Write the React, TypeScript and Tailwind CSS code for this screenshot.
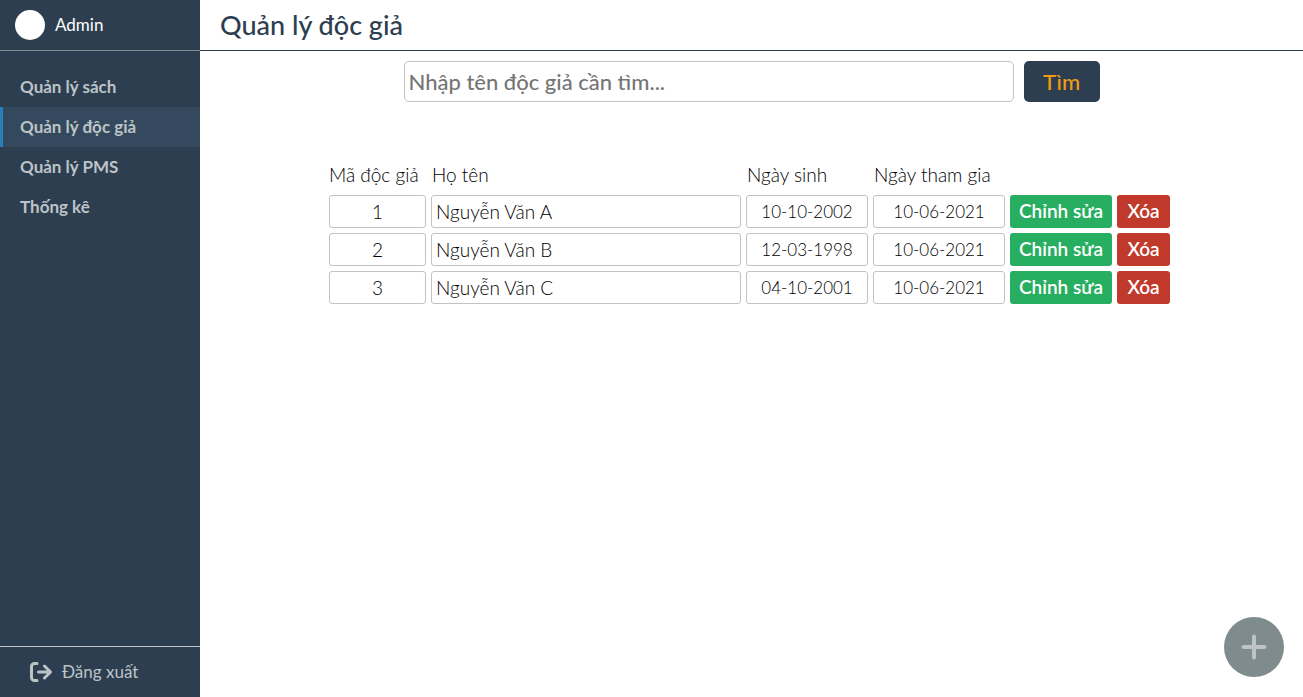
import React from "react";

const navItems = ["Quản lý sách", "Quản lý độc giả", "Quản lý PMS", "Thống kê"];

const readers = [
  { id: 1, name: "Nguyễn Văn A", birthday: "10-10-2002", joined: "10-06-2021" },
  { id: 2, name: "Nguyễn Văn B", birthday: "12-03-1998", joined: "10-06-2021" },
  { id: 3, name: "Nguyễn Văn C", birthday: "04-10-2001", joined: "10-06-2021" },
];

const cell = "h-[33px] rounded-[3px] border border-[#bdc3c7] p-0";

function Sidebar() {
  return (
    <aside className="flex w-[200px] shrink-0 flex-col bg-[#2c3e50] text-[#bdc3c7]">
      <div className="flex h-[51px] items-center gap-2.5 border-b border-[#7f8c8d] px-[15px] text-white">
        <span className="size-[30px] rounded-full bg-white" />
        <span className="text-[17px]">Admin</span>
      </div>
      <nav className="flex flex-1 flex-col pt-4">
        {navItems.map((item, i) => (
          <a
            key={item}
            href="#"
            aria-current={i === 1 ? "page" : undefined}
            className={
              i === 1
                ? "flex h-10 items-center border-l-[3px] border-[#2980b9] bg-[#34495e] pl-[17px] text-[17px] font-bold"
                : "flex h-10 items-center border-l-[3px] border-transparent pl-[17px] text-[17px] font-bold"
            }
          >
            {item}
          </a>
        ))}
      </nav>
      <a href="#" className="flex h-[51px] items-center gap-2.5 border-t border-[#bdc3c7] pl-[30px] text-[17px]">
        <svg viewBox="0 0 22 20" className="h-5 w-[22px]" fill="none" stroke="currentColor" strokeWidth="3" strokeLinecap="round" strokeLinejoin="round" aria-hidden="true">
          <path d="M7 1.500H4.500a3 3 0 0 0-3 3v11a3 3 0 0 0 3 3H7M8.500 10H20.500M14.500 4l6 6-6 6" />
        </svg>
        Đăng xuất
      </a>
    </aside>
  );
}

export default function App() {
  return (
    <div className="flex min-h-screen bg-white font-['Lato',sans-serif]">
      <Sidebar />
      <main className="min-w-0 flex-1">
        <header className="flex h-[51px] items-center border-b border-[#2c3e50] px-5">
          <h1 className="text-[27px] font-medium text-[#2c3e50]">Quản lý độc giả</h1>
        </header>
        <form className="flex justify-center gap-2.5 px-5 pt-2.5" onSubmit={(e) => e.preventDefault()}>
          <input
            type="text"
            aria-label="Tên độc giả"
            placeholder="Nhập tên độc giả cần tìm..."
            className="h-[41px] w-full max-w-[610px] rounded-[5px] border border-[#bdc3c7] px-1 text-[22px] font-medium outline-none placeholder:text-[#757575]"
          />
          <button type="submit" className="h-[41px] w-[76px] shrink-0 rounded-[5px] bg-[#2c3e50] text-[22px] font-medium text-[#f39c12]">
            Tìm
          </button>
        </form>
        <div className="flex justify-center pt-14 pr-1">
          <table className="w-full max-w-[851px] table-fixed border-separate border-spacing-[5px] text-[19px] leading-6 text-black">
            <colgroup>
              <col className="w-[97px]" />
              <col />
              <col className="w-[122px]" />
              <col className="w-[132px]" />
              <col className="w-[102px]" />
              <col className="w-[53px]" />
            </colgroup>
            <thead>
              <tr className="h-[27px] text-left align-top whitespace-nowrap">
                <th className="p-0 font-light">Mã độc giả</th>
                <th className="p-0 pl-px font-light">Họ tên</th>
                <th className="p-0 pl-px font-light">Ngày sinh</th>
                <th className="p-0 pl-px font-light">Ngày tham gia</th>
                <td className="p-0" />
                <td className="p-0" />
              </tr>
            </thead>
            <tbody>
              {readers.map((r) => (
                <tr key={r.id} className="font-light">
                  <td className={`${cell} text-center`}>{r.id}</td>
                  <td className={`${cell} pl-1`}>{r.name}</td>
                  <td className={`${cell} text-center text-[17px]`}>{r.birthday}</td>
                  <td className={`${cell} text-center text-[17px]`}>{r.joined}</td>
                  <td className="p-0">
                    <button type="button" className="block h-[33px] w-full rounded-[3px] bg-[#27ae60] pb-0.5 font-semibold text-white">
                      Chỉnh sửa
                    </button>
                  </td>
                  <td className="p-0">
                    <button type="button" className="block h-[33px] w-full rounded-[3px] bg-[#c0392b] pb-0.5 font-semibold text-white">
                      Xóa
                    </button>
                  </td>
                </tr>
              ))}
            </tbody>
          </table>
        </div>
      </main>
      <button type="button" aria-label="Thêm độc giả" className="fixed right-[19px] bottom-5 flex size-[60px] items-center justify-center rounded-full bg-[#7f8c8d] text-[#bdc3c7]">
        <svg viewBox="0 0 26 26" className="size-[26px]" fill="none" stroke="currentColor" strokeWidth="4" strokeLinecap="round" aria-hidden="true">
          <path d="M13 2.500v21M2.500 13h21" />
        </svg>
      </button>
    </div>
  );
}
